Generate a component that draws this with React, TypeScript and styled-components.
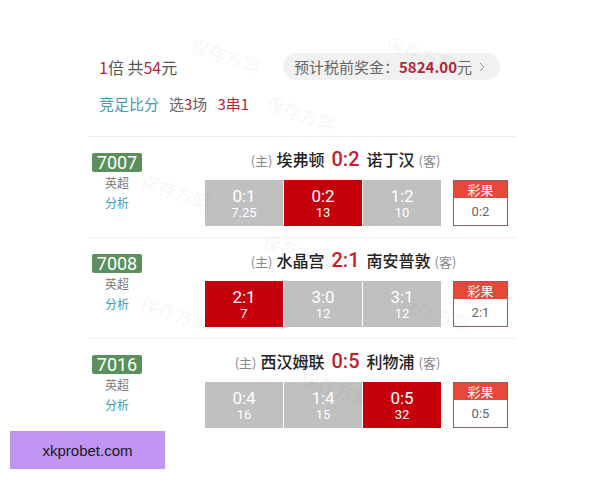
import React from 'react';
import styled, { createGlobalStyle } from 'styled-components';

const GlobalStyle = createGlobalStyle`
    html, body {
        margin: 0;
        padding: 0;
        background: #ffffff;
    }
    body {
        font-family: "Noto Sans CJK SC", "Noto Sans", sans-serif;
        color: #333;
    }
`;

interface Option {
    score: string;
    odds: string;
    hit?: boolean;
}

interface Match {
    id: string;
    league: string;
    home: string;
    away: string;
    score: string;
    options: Option[];
}

const matches: Match[] = [
    {
        id: '7007',
        league: '英超',
        home: '埃弗顿',
        away: '诺丁汉',
        score: '0:2',
        options: [
            { score: '0:1', odds: '7.25' },
            { score: '0:2', odds: '13', hit: true },
            { score: '1:2', odds: '10' },
        ],
    },
    {
        id: '7008',
        league: '英超',
        home: '水晶宫',
        away: '南安普敦',
        score: '2:1',
        options: [
            { score: '2:1', odds: '7', hit: true },
            { score: '3:0', odds: '12' },
            { score: '3:1', odds: '12' },
        ],
    },
    {
        id: '7016',
        league: '英超',
        home: '西汉姆联',
        away: '利物浦',
        score: '0:5',
        options: [
            { score: '0:4', odds: '16' },
            { score: '1:4', odds: '15' },
            { score: '0:5', odds: '32', hit: true },
        ],
    },
];

const Page = styled.div`
    position: relative;
    width: 600px;
    height: 480px;
    overflow: hidden;
    box-sizing: border-box;
    padding: 53px 83px 0 88px;
`;

const Header = styled.div`
    display: flex;
    align-items: center;
    justify-content: space-between;
    padding-left: 11px;
    padding-right: 17px;
    height: 27px;
`;

const Stake = styled.div`
    font-size: 16px;
    color: #555;
`;

const Red = styled.span<{ $bold?: boolean }>`
    color: #b3263a;
    font-weight: ${(p) => (p.$bold ? 600 : 400)};
`;

const PrizePill = styled.div`
    display: flex;
    align-items: center;
    height: 27px;
    width: 217px;
    box-sizing: border-box;
    padding: 0 10px 0 11px;
    border-radius: 14px;
    background: #f1f1f1;
    font-size: 15px;
    color: #666;
`;

const Chevron = styled.svg`
    margin-left: 7px;
    width: 6px;
    height: 10px;
`;

const PlayLine = styled.div`
    margin-top: 14px;
    padding-left: 11px;
    height: 20px;
    line-height: 20px;
    font-size: 15px;
    color: #666;
    display: flex;
    gap: 10px;
`;

const Teal = styled.span`
    color: #3b9db4;
`;

const List = styled.div`
    margin-top: 22px;
    border-top: 1px solid #efefef;
`;

const Row = styled.div`
    display: grid;
    grid-template-columns: 58px 1fr;
    column-gap: 59px;
    height: 101px;
    box-sizing: border-box;
    border-bottom: 1px solid #efefef;

    &:last-child {
        border-bottom: none;
    }
`;

const Side = styled.div`
    display: flex;
    flex-direction: column;
    align-items: center;
    padding-top: 16px;
`;

const Badge = styled.div`
    width: 50px;
    height: 19px;
    line-height: 19px;
    border-radius: 2px;
    background: #5b8f5b;
    color: #fff;
    font-size: 18px;
    text-align: center;
    font-family: "Roboto", "Noto Sans", sans-serif;
`;

const League = styled.div`
    margin-top: 2px;
    height: 18px;
    line-height: 18px;
    font-size: 12px;
    color: #777;
`;

const Analysis = styled.div`
    margin-top: 2px;
    height: 18px;
    line-height: 18px;
    font-size: 12px;
    color: #3b9db4;
`;

const Main = styled.div`
    padding-top: 9px;
`;

const Title = styled.div`
    display: grid;
    grid-template-columns: 1fr auto 1fr;
    align-items: center;
    column-gap: 7px;
    height: 26px;
    padding-right: 31px;
    margin-bottom: 8px;
    white-space: nowrap;
`;

const Home = styled.div`
    text-align: right;
    font-size: 16px;
    font-weight: 500;
    color: #222;
`;

const Away = styled.div`
    text-align: left;
    font-size: 16px;
    font-weight: 500;
    color: #222;
`;

const Tag = styled.span`
    font-size: 13px;
    font-weight: 400;
    color: #888;
    margin: 0 4px;
`;

const Score = styled.div`
    font-size: 20px;
    font-weight: 500;
    color: #c3202a;
    font-family: "Roboto", "Noto Sans", sans-serif;
`;

const Board = styled.div`
    display: flex;
    align-items: flex-start;
`;

const Options = styled.div`
    display: grid;
    grid-template-columns: repeat(3, 78px);
    column-gap: 1px;
`;

const Cell = styled.div<{ $hit?: boolean }>`
    height: 46px;
    display: flex;
    flex-direction: column;
    align-items: center;
    justify-content: center;
    background: ${(p) => (p.$hit ? '#c6000b' : '#c0c0c0')};
    color: #fff;
    font-family: "Roboto", "Noto Sans", sans-serif;
`;

const CellScore = styled.div`
    font-size: 17px;
    line-height: 18px;
`;

const CellOdds = styled.div`
    font-size: 13px;
    line-height: 15px;
`;

const Result = styled.div`
    margin-left: 12px;
    width: 55px;
    height: 46px;
    box-sizing: border-box;
    border: 1px solid #7d6565;
    display: flex;
    flex-direction: column;
`;

const ResultHead = styled.div`
    height: 17px;
    line-height: 17px;
    background: #e8483a;
    color: #fff;
    font-size: 13px;
    text-align: center;
`;

const ResultValue = styled.div`
    flex: 1;
    display: flex;
    align-items: center;
    justify-content: center;
    font-size: 13px;
    color: #666;
    font-family: "Roboto", "Noto Sans", sans-serif;
`;

const Watermark = styled.div<{ $x: number; $y: number }>`
    position: absolute;
    left: ${(p) => p.$x}px;
    top: ${(p) => p.$y}px;
    transform: rotate(18deg);
    font-size: 18px;
    font-weight: 700;
    color: rgba(0, 0, 0, 0.035);
    pointer-events: none;
    white-space: nowrap;
`;

const Banner = styled.div`
    position: absolute;
    left: 10px;
    top: 431px;
    width: 155px;
    height: 38px;
    background: #bf94f3;
    display: flex;
    align-items: center;
    justify-content: center;
    font-family: "Liberation Sans", Arial, sans-serif;
    font-size: 15px;
    color: #1a1a1a;
`;

const marks = [
    { x: 190, y: 42 },
    { x: 385, y: 40 },
    { x: 265, y: 100 },
    { x: 140, y: 178 },
    { x: 262, y: 238 },
    { x: 140, y: 300 },
    { x: 400, y: 300 },
    { x: 300, y: 375 },
];

export default function App() {
    return (
        <>
            <GlobalStyle />
            <Page>
                <Header>
                    <Stake>
                        <Red>1</Red>倍 共<Red>54</Red>元
                    </Stake>
                    <PrizePill>
                        预计税前奖金：<Red $bold>5824.00</Red>元
                        <Chevron viewBox="0 0 6 10">
                            <path d="M1 1 L5 5 L1 9" fill="none" stroke="#999" strokeWidth="1" />
                        </Chevron>
                    </PrizePill>
                </Header>
                <PlayLine>
                    <Teal>竞足比分</Teal>
                    <span>
                        选<Red>3</Red>场
                    </span>
                    <Red>3串1</Red>
                </PlayLine>
                <List>
                    {matches.map((m) => (
                        <Row key={m.id}>
                            <Side>
                                <Badge>{m.id}</Badge>
                                <League>{m.league}</League>
                                <Analysis>分析</Analysis>
                            </Side>
                            <Main>
                                <Title>
                                    <Home>
                                        <Tag>(主)</Tag>
                                        {m.home}
                                    </Home>
                                    <Score>{m.score}</Score>
                                    <Away>
                                        {m.away}
                                        <Tag>(客)</Tag>
                                    </Away>
                                </Title>
                                <Board>
                                    <Options>
                                        {m.options.map((o) => (
                                            <Cell key={o.score} $hit={o.hit}>
                                                <CellScore>{o.score}</CellScore>
                                                <CellOdds>{o.odds}</CellOdds>
                                            </Cell>
                                        ))}
                                    </Options>
                                    <Result>
                                        <ResultHead>彩果</ResultHead>
                                        <ResultValue>{m.score}</ResultValue>
                                    </Result>
                                </Board>
                            </Main>
                        </Row>
                    ))}
                </List>
                {marks.map((w, i) => (
                    <Watermark key={i} $x={w.x} $y={w.y}>
                        保存方案
                    </Watermark>
                ))}
                <Banner>xkprobet.com</Banner>
            </Page>
        </>
    );
}
